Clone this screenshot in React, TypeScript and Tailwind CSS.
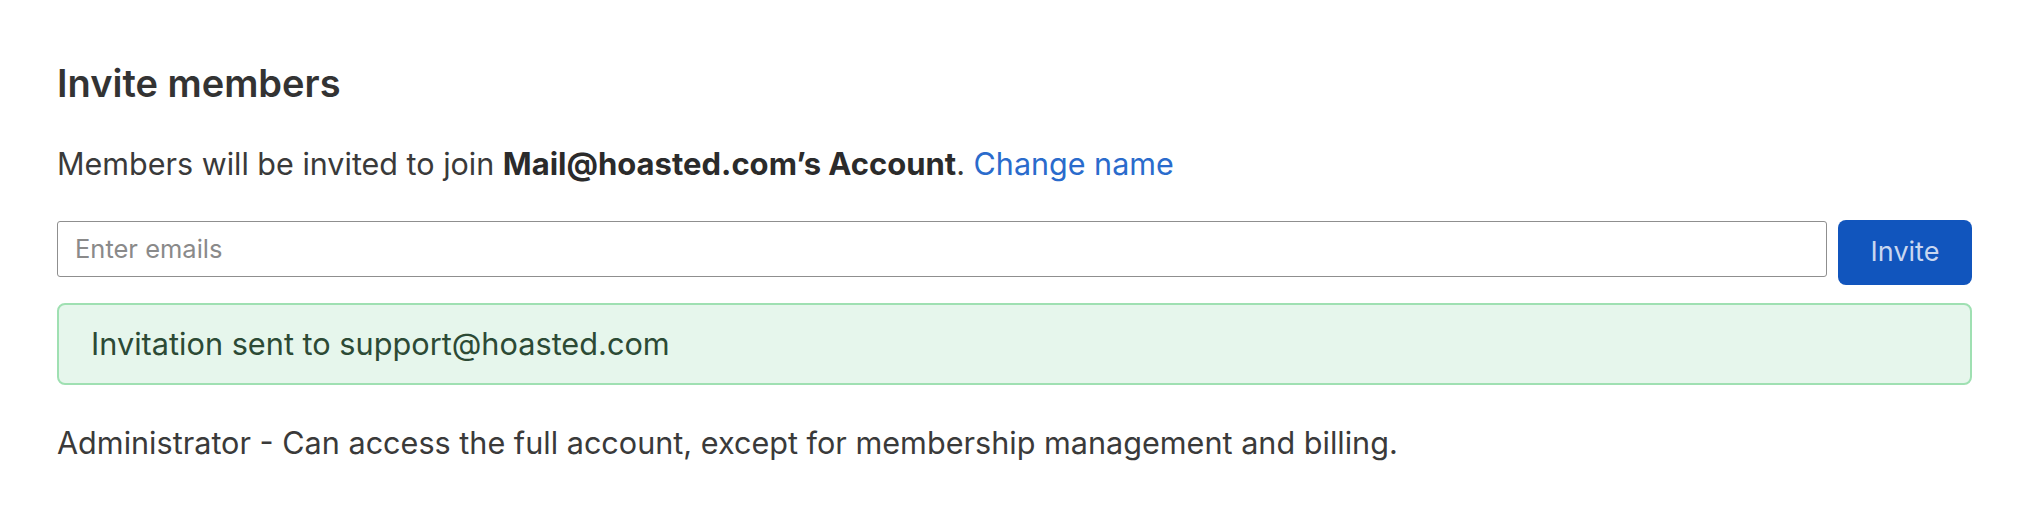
export default function App() {
  return (
    <div className="w-[2022px] h-[508px] bg-white pl-[57px] pr-[50px] pt-[60px] text-[#333333]" style={{ fontFamily: "Inter, 'Liberation Sans', sans-serif" }}>
      <h2 className="text-[38px] leading-[46px] font-semibold text-[#333333]">Invite members</h2>
      <p className="mt-[38px] text-[30.5px] leading-[40px] text-[#3a3a3a]">
        Members will be invited to join <span className="font-bold text-[31px] text-[#2b2b2b]">Mail@hoasted.com’s Account</span>.{" "}
        <a className="text-[#2a6bcc]">Change name</a>
      </p>
      <div className="mt-[36px] flex items-start gap-[11px]">
        <div className="flex-1 h-[56px] mt-[1px] border-[1.5px] border-[#8f8f8f] rounded-[3px] flex items-center px-[17px]">
          <span className="text-[25.5px] text-[#8a8a8a]">Enter emails</span>
        </div>
        <button className="w-[134px] h-[65px] rounded-[8px] bg-[#1155bd] text-[27px] text-[#c9d7f0]">Invite</button>
      </div>
      <div className="mt-[18px] h-[82px] rounded-[8px] border-2 border-[#9fe0b2] bg-[#e6f6ec] flex items-center px-[32px]">
        <span className="text-[30.7px] text-[#2c4a35]">Invitation sent to support@hoasted.com</span>
      </div>
      <p className="mt-[38px] text-[30.6px] leading-[40px] text-[#3a3a3a]">
        Administrator - Can access the full account, except for membership management and billing.
      </p>
    </div>
  );
}
